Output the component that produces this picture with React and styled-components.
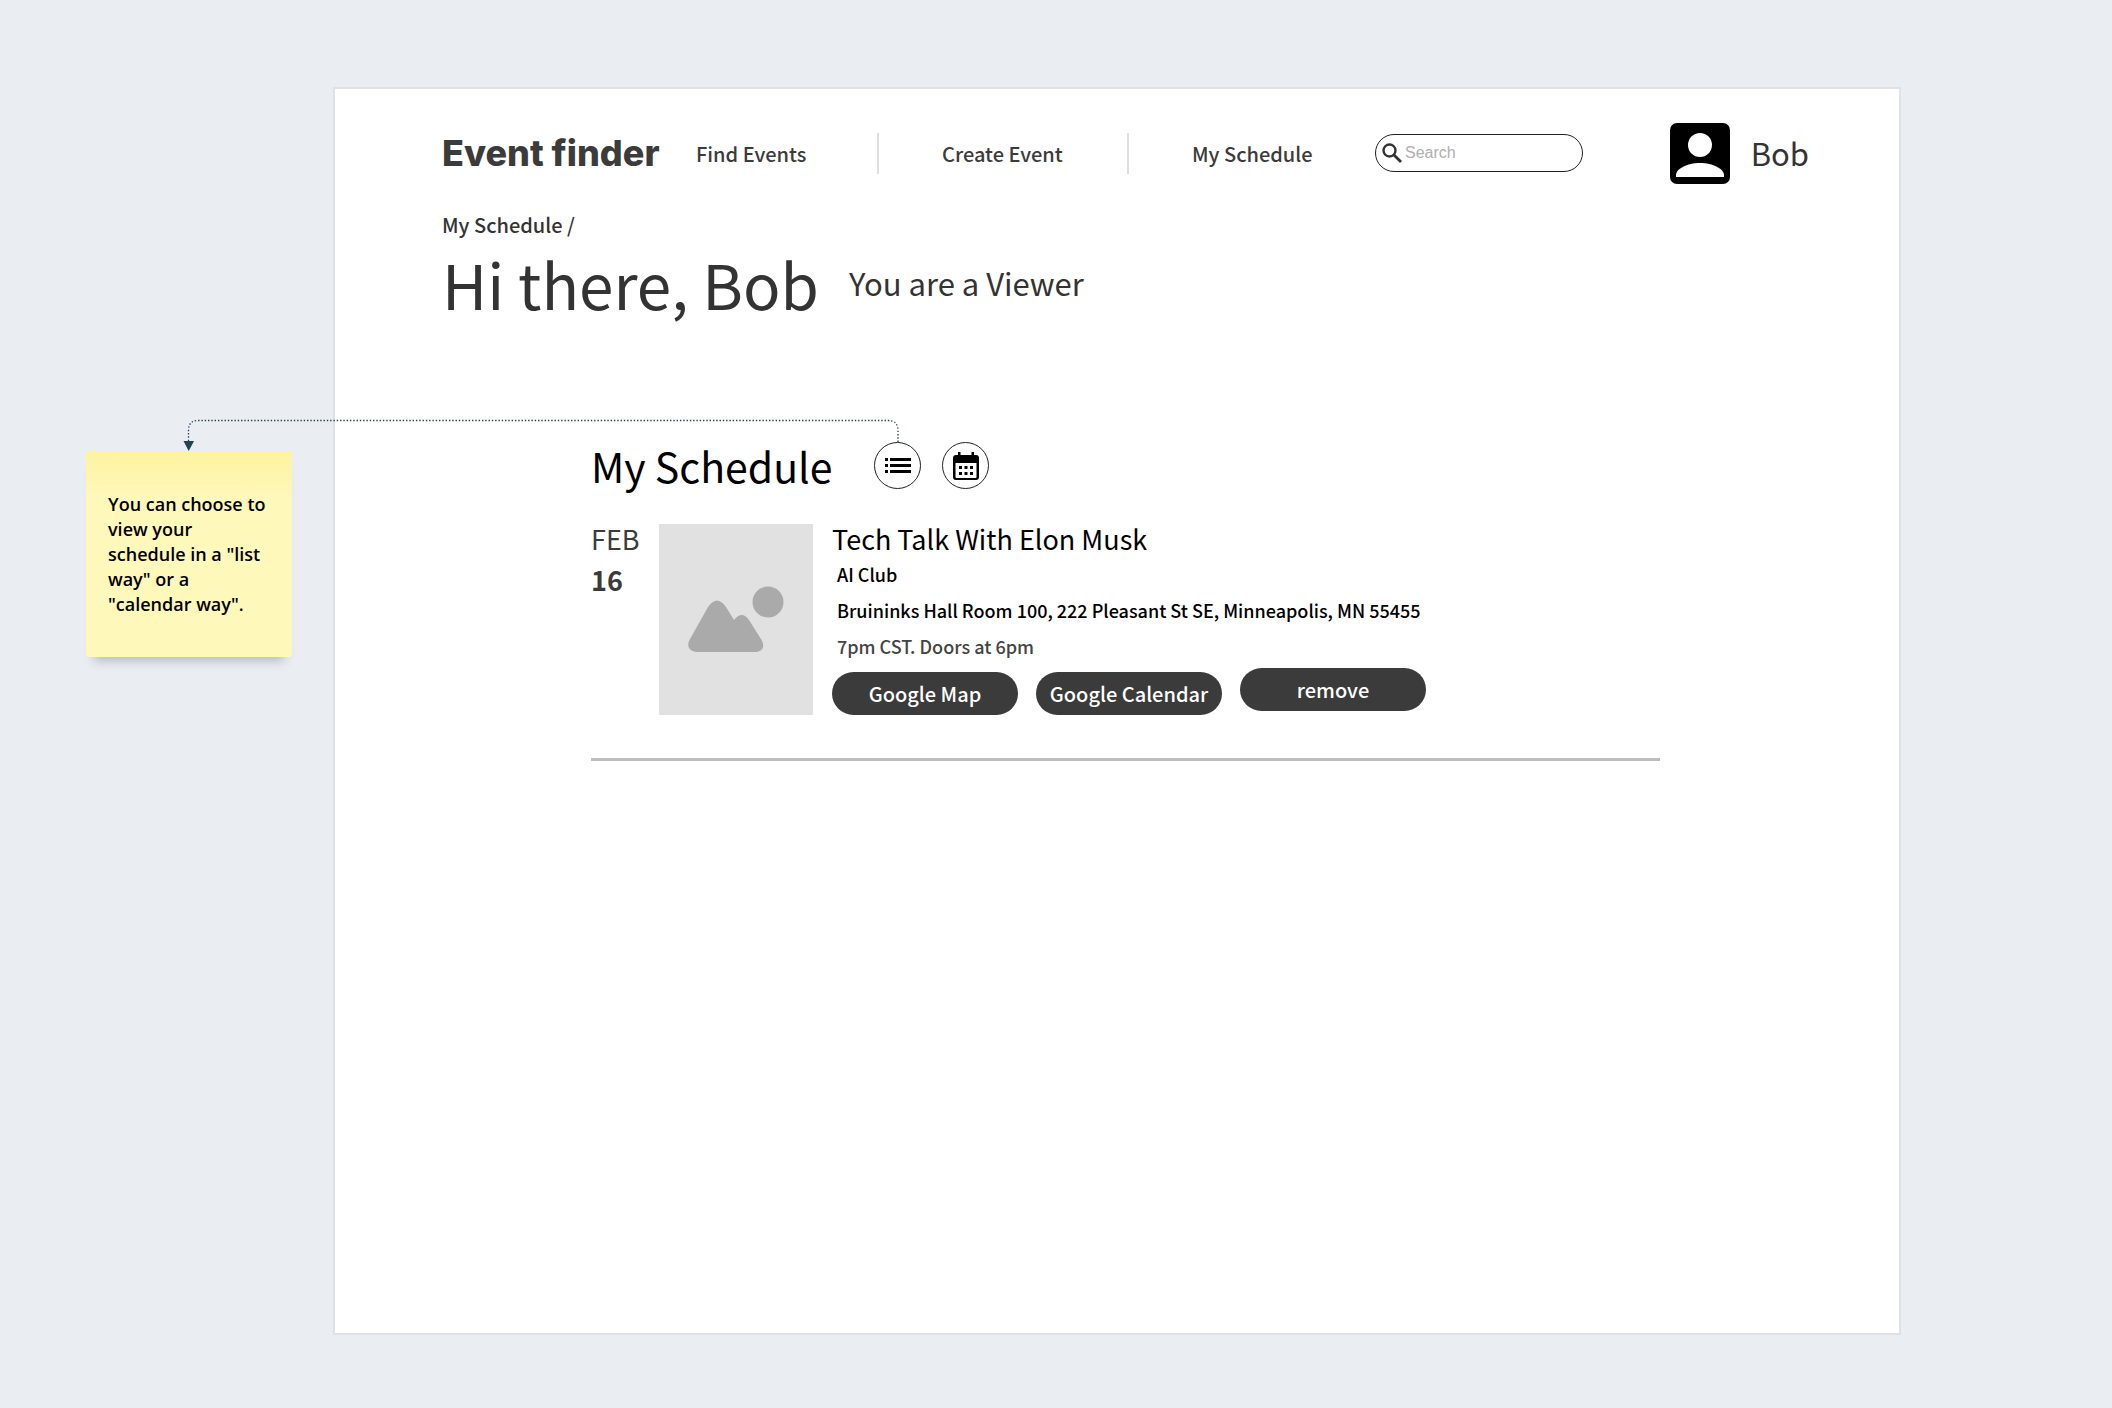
import React from "react";
import styled, { createGlobalStyle } from "styled-components";

const sans = `"Noto Sans CJK SC", "Noto Sans", sans-serif`;
const ink = "#333333";
const charcoal = "#3b3b3b";

const GlobalStyle = createGlobalStyle`
  *, *::before, *::after { box-sizing: border-box; }
  body { margin: 0; background: #eaeef3; color: ${ink}; font-family: ${sans}; }
  h1, h2, h3, p { margin: 0; font-weight: 400; }
  button, input { font: inherit; color: inherit; margin: 0; }
`;

const Board = styled.div`
  position: relative;
  display: flex;
  align-items: flex-start;
  gap: 41px;
  min-height: 100vh;
  padding: 87px 211px 73px 86px;
`;

const Note = styled.aside`
  display: flex;
  align-items: center;
  flex: none;
  width: 206px;
  height: 206px;
  margin-top: 364px;
  padding: 0 20px 0 22px;
  border-radius: 3px;
  background: linear-gradient(#fcf3a0, #fff8bb 48px);
  box-shadow: 0 12px 10px -8px rgba(60, 70, 80, 0.3);
  color: #000;
  font: 600 18px/25px "Open Sans", sans-serif;
`;

const Connector = styled.svg`
  position: absolute;
  top: 410px;
  left: 180px;
  pointer-events: none;
`;

const Frame = styled.div`
  flex: 1;
  align-self: stretch;
  min-width: 0;
  padding: 28px 90px 40px 107px;
  border: 2px solid #dee1e5;
  background: #fff;
`;

const Header = styled.header`
  display: flex;
  align-items: center;
  height: 72px;
`;

const Brand = styled.a`
  width: 254px;
  color: ${charcoal};
  font: 800 36px/40px Inter, sans-serif;
  text-decoration: none;
  white-space: nowrap;
`;

const Nav = styled.nav`
  display: flex;
  align-items: center;
`;

const NavLink = styled.a`
  width: ${(p) => p.$width}px;
  padding-left: ${(p) => p.$indent || 0}px;
  border-left: ${(p) => (p.$indent ? "2px solid #dfdfdf" : "0")};
  color: ${charcoal};
  font-size: 20px;
  font-weight: 500;
  line-height: 41px;
  text-decoration: none;
  white-space: nowrap;
`;

const SearchBox = styled.label`
  display: flex;
  align-items: center;
  gap: 3px;
  width: 208px;
  height: 38px;
  padding: 0 8px 0 6px;
  border: 1px solid #222;
  border-radius: 19px;
`;

const SearchInput = styled.input`
  flex: 1;
  min-width: 0;
  padding: 0;
  border: 0;
  outline: 0;
  background: none;
  font: 16px/24px "Liberation Sans", Arial, sans-serif;
  &::placeholder { color: #b0b0b0; opacity: 1; }
`;

const Profile = styled.div`
  display: flex;
  align-items: center;
  gap: 21px;
  margin-left: auto;
  font-size: 31px;
  line-height: 40px;
`;

const Crumb = styled.nav`
  margin-top: 20px;
  font-size: 20px;
  font-weight: 500;
  line-height: 32px;
  a { color: inherit; text-decoration: none; }
`;

const Greeting = styled.div`
  display: flex;
  align-items: center;
  gap: 30px;
  height: 84px;
`;

const Title = styled.h1`
  font-size: 62px;
  line-height: 80px;
`;

const Role = styled.p`
  font-size: 31px;
  line-height: 40px;
`;

const Schedule = styled.section`
  max-width: 1069px;
  margin: 117px 0 0 149px;
  color: #000;
`;

const ScheduleHead = styled.div`
  display: flex;
  align-items: center;
  gap: 21px;
  height: 47px;
`;

const SectionTitle = styled.h2`
  width: 262px;
  font-size: 41px;
  line-height: 47px;
`;

const RoundButton = styled.button`
  display: grid;
  place-items: center;
  width: 47px;
  height: 47px;
  padding: 0;
  border: 1px solid #222;
  border-radius: 50%;
  background: #fff;
`;

const Event = styled.article`
  display: flex;
  margin-top: 35px;
  padding-bottom: 43px;
  border-bottom: 3px solid #bdbdbd;
`;

const DateLabel = styled.time`
  display: flex;
  flex-direction: column;
  gap: 11px;
  width: 68px;
  color: ${charcoal};
  font-size: 27px;
  line-height: 30px;
  b { font-weight: 700; }
`;

const Thumb = styled.div`
  width: 154px;
  height: 191px;
  margin-right: 19px;
  background: #e1e1e1;
`;

const EventTitle = styled.h3`
  margin-bottom: 2px;
  font-size: 27px;
  line-height: 30px;
`;

const Detail = styled.p`
  padding-left: 5px;
  color: ${(p) => (p.$muted ? "#444" : "#000")};
  font-size: 18px;
  font-weight: 500;
  line-height: 36px;
`;

const Actions = styled.div`
  display: flex;
  gap: 18px;
  padding-top: 8px;
`;

const Pill = styled.button`
  width: 186px;
  height: 43px;
  margin-top: ${(p) => (p.$raised ? "-4px" : "0")};
  padding: 0;
  border: 0;
  border-radius: 22px;
  background: ${charcoal};
  color: #fff;
  font-size: 20px;
  font-weight: 500;
  line-height: 43px;
  white-space: nowrap;
`;

const SearchIcon = () => (
  <svg width="20" height="20" viewBox="0 0 20 20" fill="none" stroke="#333" aria-hidden="true">
    <circle cx="7.5" cy="7.5" r="6" strokeWidth="2.4" />
    <path d="M12 12l7 7" strokeWidth="2.8" />
  </svg>
);

const PersonIcon = () => (
  <svg width="60" height="61" viewBox="0 0 60 61" aria-hidden="true">
    <rect width="60" height="61" rx="7" fill="#000" />
    <circle cx="30" cy="22" r="12" fill="#fff" />
    <path d="M6 54v-2c0-6 11-12 24-12s24 6 24 12v2z" fill="#fff" />
  </svg>
);

const ListIcon = () => (
  <svg width="26" height="15" viewBox="0 0 26 15" aria-hidden="true">
    <path d="M0 0h3v3H0zM5 0h21v3H5zM0 6h3v3H0zM5 6h21v3H5zM0 12h3v3H0zM5 12h21v3H5z" />
  </svg>
);

const CalendarIcon = () => (
  <svg width="26" height="28" viewBox="0 0 26 28" aria-hidden="true">
    <path
      fillRule="evenodd"
      d="M5 3V0h2.500v3h11V0H21v3h2a3 3 0 0 1 3 3v19a3 3 0 0 1-3 3H3a3 3 0 0 1-3-3V6a3 3 0 0 1 3-3zM2.500 11v14a1 1 0 0 0 1 1h19a1 1 0 0 0 1-1V11z"
    />
    <path d="M6 14h3v3H6zM11.500 14h3v3h-3zM17 14h3v3h-3zM6 20h3v3H6zM11.500 20h3v3h-3zM17 20h3v3h-3z" />
  </svg>
);

const PictureIcon = () => (
  <svg width="154" height="191" viewBox="0 0 154 191" fill="#aaa" aria-hidden="true">
    <circle cx="109" cy="78" r="15.5" />
    <path d="M31 115L49 83Q58 70 67 83L75 96Q83 86 90 96L102 115C107 123 103 128 96 128H40C30 128 27 122 31 115Z" />
  </svg>
);

export default function App() {
  return (
    <>
      <GlobalStyle />
      <Board>
        <Note>You can choose to view your schedule in a "list way" or a "calendar way".</Note>
        <Frame>
          <Header>
            <Brand href="#">Event finder</Brand>
            <Nav aria-label="Main">
              <NavLink href="#find" $width={181}>Find Events</NavLink>
              <NavLink href="#create" $width={250} $indent={63}>Create Event</NavLink>
              <NavLink href="#schedule" $width={248} $indent={63}>My Schedule</NavLink>
            </Nav>
            <SearchBox>
              <SearchIcon />
              <SearchInput type="search" placeholder="Search" aria-label="Search" />
            </SearchBox>
            <Profile>
              <PersonIcon />
              Bob
            </Profile>
          </Header>
          <Crumb aria-label="Breadcrumb">
            <a href="#schedule">My Schedule</a> /
          </Crumb>
          <Greeting>
            <Title>Hi there, Bob</Title>
            <Role>You are a Viewer</Role>
          </Greeting>
          <Schedule>
            <ScheduleHead>
              <SectionTitle>My Schedule</SectionTitle>
              <RoundButton type="button" aria-label="List view"><ListIcon /></RoundButton>
              <RoundButton type="button" aria-label="Calendar view"><CalendarIcon /></RoundButton>
            </ScheduleHead>
            <Event>
              <DateLabel>
                FEB<b>16</b>
              </DateLabel>
              <Thumb><PictureIcon /></Thumb>
              <div>
                <EventTitle>Tech Talk With Elon Musk</EventTitle>
                <Detail>AI Club</Detail>
                <Detail>Bruininks Hall Room 100, 222 Pleasant St SE, Minneapolis, MN 55455</Detail>
                <Detail $muted>7pm CST. Doors at 6pm</Detail>
                <Actions>
                  <Pill type="button">Google Map</Pill>
                  <Pill type="button">Google Calendar</Pill>
                  <Pill type="button" $raised>remove</Pill>
                </Actions>
              </div>
            </Event>
          </Schedule>
        </Frame>
        <Connector width="730" height="42" viewBox="0 0 730 42" aria-hidden="true">
          <path
            d="M718 32V20.5Q718 10.5 708 10.5H18Q8.500 10.5 8.500 20.5V31"
            fill="none"
            stroke="#234252"
            strokeWidth="1.3"
            strokeDasharray="1.4 1.9"
          />
          <path d="M3.500 31h10.500l-5.300 10z" fill="#234252" />
        </Connector>
      </Board>
    </>
  );
}
